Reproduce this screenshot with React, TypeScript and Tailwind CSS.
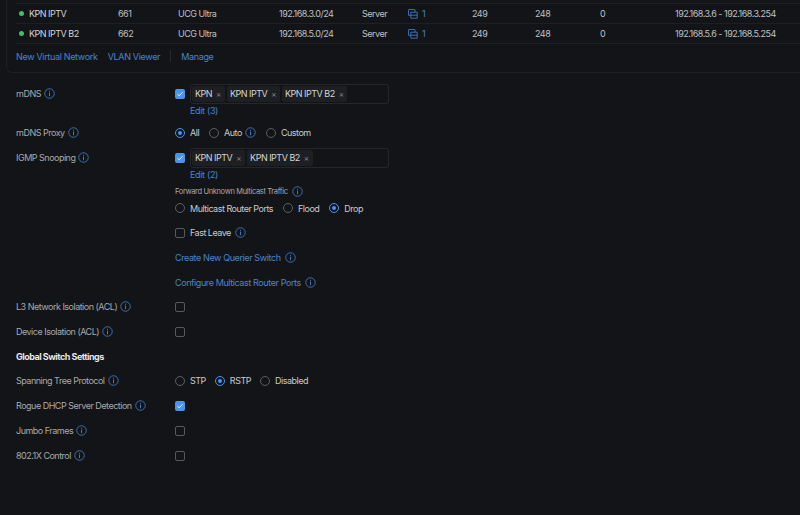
import type { ReactNode } from "react"

function Info() {
    return (
        <svg width="11" height="11" viewBox="0 0 11 11" fill="none" className="shrink-0">
            <circle cx="5.5" cy="5.5" r="4.75" stroke="#3f78bd" strokeWidth="0.9" />
            <rect x="5" y="4.6" width="1" height="3.6" fill="#3f78bd" />
            <rect x="5" y="2.8" width="1" height="1" fill="#3f78bd" />
        </svg>
    )
}

function Checkbox({ checked = false }: { checked?: boolean }) {
    if (checked) {
        return (
            <span className="flex h-[10px] w-[10px] shrink-0 items-center justify-center rounded-[2px] bg-[#4a94f0]">
                <svg width="8" height="8" viewBox="0 0 8 8" fill="none">
                    <path d="M1.5 4.2 L3.2 5.8 L6.5 2.2" stroke="#e8f1fd" strokeWidth="1" />
                </svg>
            </span>
        )
    }
    return <span className="h-[10px] w-[10px] shrink-0 rounded-[2px] border border-[#55585d]" />
}

function Radio({ label, on = false, info = false }: { label: string; on?: boolean; info?: boolean }) {
    return (
        <span className="flex items-center">
            {on ? (
                <span className="flex h-[10px] w-[10px] items-center justify-center rounded-full border border-[#4a94f0]">
                    <span className="h-[4px] w-[4px] rounded-full bg-[#4a94f0]" />
                </span>
            ) : (
                <span className="h-[10px] w-[10px] rounded-full border border-[#5c5f64]" />
            )}
            <span className="ml-[5px] text-[#c9cacc]">{label}</span>
            {info && <span className="ml-[3px]"><Info /></span>}
        </span>
    )
}

function Tag({ label }: { label: string }) {
    return (
        <span className="flex h-[16px] items-center gap-[4px] rounded-[2px] bg-[#1d1f22] pl-[3px] pr-[4px] text-[#d4d5d7]">
            {label}
            <span className="text-[8px] leading-none text-[#85888d]">×</span>
        </span>
    )
}

function Row({ label, info = true, children }: { label: string; info?: boolean; children?: ReactNode }) {
    return (
        <div className="flex h-[25px] items-center">
            <div className="flex w-[175px] shrink-0 items-center gap-[3px] pl-4 whitespace-nowrap text-[#a7a9ad]">
                {label}
                {info && <Info />}
            </div>
            {children}
        </div>
    )
}

const networks = [
    { name: "KPN IPTV", vlan: "661", subnet: "192.168.3.0/24", range: "192.168.3.6 - 192.168.3.254" },
    { name: "KPN IPTV B2", vlan: "662", subnet: "192.168.5.0/24", range: "192.168.5.6 - 192.168.5.254" },
]

export default function App() {
    return (
        <div
            className="h-[515px] w-[800px] overflow-hidden bg-[#131417] text-[9px] leading-none tracking-[-0.5px]"
            style={{ fontFamily: "Inter, 'Noto Sans', sans-serif" }}
        >
            {/* Networks table */}
            <div className="-mr-2 ml-[6px] h-[73px] rounded-bl-md border-b border-l border-[#1d1f22]">
                <div className="ml-[9px] h-[4px] border-b border-[#1d1f22]" />
                {networks.map((n) => (
                    <div
                        key={n.name}
                        className="ml-[9px] grid h-[20px] grid-cols-[102px_60px_101px_83px_46px_64px_63px_65px_75px_1fr] items-center border-b border-[#1d1f22] text-[#bfc0c3]"
                    >
                        <span className="flex items-center pl-[3px] text-[#d4d5d7]">
                            <span className="h-[5px] w-[5px] rounded-full bg-[#3fc06b]" />
                            <span className="ml-[5px]">{n.name}</span>
                        </span>
                        <span>{n.vlan}</span>
                        <span>UCG Ultra</span>
                        <span>{n.subnet}</span>
                        <span>Server</span>
                        <span className="flex items-center gap-[4px] text-[#4a84cc]">
                            <svg width="10" height="10" viewBox="0 0 10 10" fill="none" stroke="#3f78bd" strokeWidth="0.9">
                                <path d="M2.5 6.5 H1 a0.5 0.5 0 0 1 -0.5 -0.5 V1 a0.5 0.5 0 0 1 0.5 -0.5 H6.5 a0.5 0.5 0 0 1 0.5 0.5 V3" />
                                <path d="M2.8 3.2 H9.2 V9.2 H2.8 Z" />
                                <path d="M2.8 6.2 H9.2" />
                            </svg>
                            1
                        </span>
                        <span>249</span>
                        <span>248</span>
                        <span>0</span>
                        <span>{n.range}</span>
                    </div>
                ))}
                <div className="ml-[9px] mt-[6px] flex items-center tracking-[-0.33px] text-[#4a84cc]">
                    <span>New Virtual Network</span>
                    <span className="ml-[10px]">VLAN Viewer</span>
                    <span className="mx-[10px] h-[12px] w-px bg-[#26282c]" />
                    <span>Manage</span>
                </div>
            </div>

            {/* Settings form */}
            <div className="mt-[8px]">
                <Row label="mDNS">
                    <Checkbox checked />
                    <div className="ml-[5px] flex h-[20px] w-[199px] items-center gap-[2px] rounded-[3px] border border-[#25272b] pl-[1px]">
                        <Tag label="KPN" />
                        <Tag label="KPN IPTV" />
                        <Tag label="KPN IPTV B2" />
                    </div>
                </Row>
                <div className="h-[14px] pl-[190px] tracking-[-0.33px] text-[#4a84cc]">Edit (3)</div>
                <Row label="mDNS Proxy">
                    <div className="flex gap-[10px]">
                        <Radio label="All" on />
                        <Radio label="Auto" info />
                        <Radio label="Custom" />
                    </div>
                </Row>
                <Row label="IGMP Snooping">
                    <Checkbox checked />
                    <div className="ml-[5px] flex h-[20px] w-[199px] items-center gap-[2px] rounded-[3px] border border-[#25272b] pl-[1px]">
                        <Tag label="KPN IPTV" />
                        <Tag label="KPN IPTV B2" />
                    </div>
                </Row>
                <div className="h-[14px] pl-[190px] tracking-[-0.33px] text-[#4a84cc]">Edit (2)</div>
                <div className="flex h-[15px] items-center gap-[4px] pl-[175px] text-[7.5px] tracking-[-0.35px] text-[#a7a9ad]">
                    Forward Unknown Multicast Traffic
                    <Info />
                </div>
                <div className="flex h-[18px] items-center gap-[10px] pl-[175px]">
                    <Radio label="Multicast Router Ports" />
                    <Radio label="Flood" />
                    <Radio label="Drop" on />
                </div>
                <div className="mt-[3px]">
                    <Row label="" info={false}>
                        <Checkbox />
                        <span className="ml-[5px] mr-[4px] text-[#c9cacc]">Fast Leave</span>
                        <Info />
                    </Row>
                </div>
                <Row label="" info={false}>
                    <span className="mr-[4px] tracking-[-0.4px] text-[#4a84cc]">Create New Querier Switch</span>
                    <Info />
                </Row>
                <div className="-mb-px">
                    <Row label="" info={false}>
                        <span className="mr-[4px] tracking-[-0.4px] text-[#4a84cc]">Configure Multicast Router Ports</span>
                        <Info />
                    </Row>
                </div>
                <Row label="L3 Network Isolation (ACL)">
                    <Checkbox />
                </Row>
                <Row label="Device Isolation (ACL)">
                    <Checkbox />
                </Row>
                <div className="flex h-[24px] items-center pl-4 font-bold text-[#e6e7e8]">Global Switch Settings</div>
                <Row label="Spanning Tree Protocol">
                    <div className="flex gap-[9px]">
                        <Radio label="STP" />
                        <Radio label="RSTP" on />
                        <Radio label="Disabled" />
                    </div>
                </Row>
                <Row label="Rogue DHCP Server Detection">
                    <Checkbox checked />
                </Row>
                <Row label="Jumbo Frames">
                    <Checkbox />
                </Row>
                <Row label="802.1X Control">
                    <Checkbox />
                </Row>
            </div>
        </div>
    )
}
